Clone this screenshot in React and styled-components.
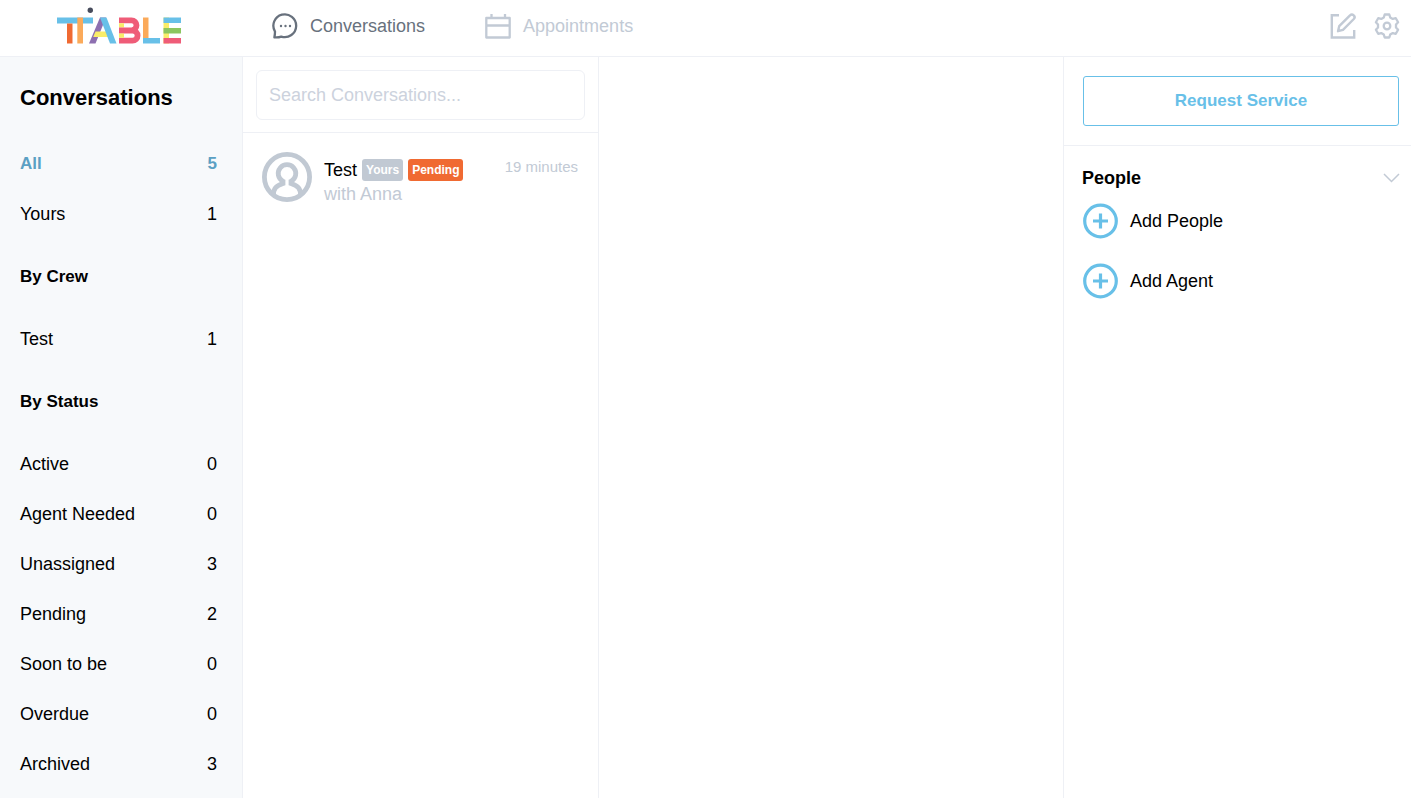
import React, { useState } from "react";
import styled, { createGlobalStyle } from "styled-components";

const GlobalStyle = createGlobalStyle`
    * {
        box-sizing: border-box;
        margin: 0;
        padding: 0;
    }
    body {
        background: #fff;
        color: #000;
        font-family: "Helvetica Neue", "Liberation Sans", Arial, sans-serif;
        font-size: 18px;
    }
    ul {
        list-style: none;
    }
    a {
        color: inherit;
        text-decoration: none;
    }
    button,
    input {
        font: inherit;
        color: inherit;
    }
    svg {
        display: block;
        flex-shrink: 0;
    }
`;

const Page = styled.div`
    display: flex;
    flex-direction: column;
    min-height: 100vh;
`;

const Header = styled.header`
    display: flex;
    align-items: center;
    height: 57px;
    padding: 0 11px 4px 0;
    border-bottom: 1px solid #eef0f5;
`;

const LogoLink = styled.a`
    width: 272px;
    padding-left: 56px;
`;

const Nav = styled.nav`
    display: flex;
    flex: 1;
    gap: 60px;
`;

const NavItem = styled.a`
    display: flex;
    align-items: center;
    gap: 12px;
    color: ${({ $active }) => ($active ? "#68717d" : "#c2cad5")};
`;

const Tools = styled.div`
    display: flex;
    gap: 18px;
`;

const IconButton = styled.button`
    border: 0;
    background: none;
    color: #c2cad5;
    cursor: pointer;
`;

const Body = styled.div`
    display: flex;
    flex: 1;
`;

const Sidebar = styled.aside`
    width: 243px;
    padding: 0 25px 9px 20px;
    background: #f7f9fb;
    border-right: 1px solid #eef0f5;
`;

const SidebarTitle = styled.h1`
    font-size: 22px;
    line-height: 82px;
`;

const GroupTitle = styled.h2`
    font-size: 17px;
    line-height: 75px;
`;

const FilterLink = styled.a`
    display: flex;
    justify-content: space-between;
    font-size: ${({ $active }) => ($active ? "17px" : "18px")};
    font-weight: ${({ $active }) => ($active ? "bold" : "normal")};
    line-height: 50px;
    color: ${({ $active }) => ($active ? "#5ba0c3" : "#000")};
`;

const ListColumn = styled.section`
    width: 356px;
    border-right: 1px solid #eef0f5;
`;

const SearchBar = styled.div`
    padding: 13px 13px 12px;
    border-bottom: 1px solid #eef0f5;
`;

const SearchInput = styled.input`
    display: block;
    width: 100%;
    height: 50px;
    padding: 0 12px;
    border: 1px solid #eef0f5;
    border-radius: 6px;
    outline: none;
    &::placeholder {
        color: #ccd2dd;
        opacity: 1;
    }
`;

const Conversation = styled.a`
    display: flex;
    gap: 12px;
    padding: 19px 20px 19px 19px;
`;

const Summary = styled.div`
    flex: 1;
    padding-top: 7px;
`;

const NameLine = styled.div`
    display: flex;
    align-items: center;
    gap: 5px;
    height: 22px;
`;

const Muted = styled.p`
    color: #c2cad5;
    line-height: 26px;
`;

const Badge = styled.span`
    padding: 0 4px;
    border-radius: 3px;
    background: ${({ $color }) => $color};
    color: #fff;
    font-size: 12px;
    font-weight: bold;
    line-height: 22px;
`;

const Time = styled.time`
    padding-top: 3px;
    color: #c2cad5;
    font-size: 15px;
    line-height: 24px;
`;

const Thread = styled.main`
    flex: 1;
`;

const Details = styled.aside`
    width: 348px;
    border-left: 1px solid #eef0f5;
`;

const RequestBox = styled.div`
    padding: 19px 12px 19px 19px;
    border-bottom: 1px solid #eef0f5;
`;

const RequestButton = styled.button`
    width: 100%;
    height: 50px;
    border: 1px solid #68c0e8;
    border-radius: 3px;
    background: #fff;
    color: #68c0e8;
    font-size: 17px;
    font-weight: bold;
    cursor: pointer;
`;

const PeopleBox = styled.div`
    padding: 19px 11px 19px 18px;
`;

const PeopleToggle = styled.button`
    display: flex;
    justify-content: space-between;
    align-items: center;
    width: 100%;
    height: 26px;
    border: 0;
    background: none;
    font-weight: bold;
    cursor: pointer;
`;

const PeopleList = styled.ul`
    display: flex;
    flex-direction: column;
    gap: 24px;
    padding-top: 12px;
`;

const AddButton = styled.button`
    display: flex;
    align-items: center;
    gap: 12px;
    border: 0;
    background: none;
    cursor: pointer;
`;

const groups = [
    {
        items: [
            { name: "All", count: 5 },
            { name: "Yours", count: 1 },
        ],
    },
    { title: "By Crew", items: [{ name: "Test", count: 1 }] },
    {
        title: "By Status",
        items: [
            { name: "Active", count: 0 },
            { name: "Agent Needed", count: 0 },
            { name: "Unassigned", count: 3 },
            { name: "Pending", count: 2 },
            { name: "Soon to be", count: 0 },
            { name: "Overdue", count: 0 },
            { name: "Archived", count: 3 },
        ],
    },
];

const Logo = () => (
    <svg width="126" height="40" viewBox="0 0 126 40" role="img">
        <title>TTable</title>
        <circle cx="34.3" cy="4.2" r="2.7" fill="#474c5c" />
        <path d="M1 11.5h36v6H1z" fill="#68c0e8" />
        <path d="M11 17.5h5.5v20H11z" fill="#f06a32" />
        <path d="M21.3 11.5H27v26h-5.7z" fill="#fbaa5a" />
        <path d="M44 11.5h6l-10.5 26H33z" fill="#8d6fb0" />
        <path d="M39.5 25.500h13l2 5.500H37.200z" fill="#f9ed69" />
        <path d="M44 11.500h6.500l10 26H54z" fill="#68c0e8" />
        <path
            d="M63 14.300h12.500a5 5 0 0 1 0 10H68M68 24.500h8.500a5 5 0 0 1 0 10.200H63"
            fill="none"
            stroke="#ef5c78"
            strokeWidth="5.800"
        />
        <path d="M63 17.200h5v4.300h-5zM63 27.300h5v4.500h-5z" fill="#f9ed69" />
        <path d="M63 21.500h5v5.800h-5z" fill="#ef5c78" />
        <path d="M87 11.500h5.500v20.500H87z" fill="#fbaa5a" />
        <path d="M87 32h17v5.500H87z" fill="#68c0e8" />
        <path d="M107.500 11.500h5.500v26h-5.500z" fill="#f9ed69" />
        <path d="M107.500 11.500H125V17h-17.500z" fill="#68c0e8" />
        <path d="M107.500 22H125v5.500h-17.500z" fill="#8cc660" />
        <path d="M107.500 32H125v5.500h-17.500z" fill="#ef5c78" />
    </svg>
);

const ChatIcon = () => (
    <svg width="26" height="26" viewBox="0 0 26 26" fill="none">
        <path
            d="M2.400 24.300c.4-1.700.6-3.500.6-5.700A11.400 11.400 0 1 1 9.300 23.600c-2.200.8-4.500 1-6.900.7z"
            stroke="currentColor"
            strokeWidth="2.300"
            strokeLinejoin="round"
        />
        <g fill="currentColor">
            <circle cx="9" cy="13" r="1.200" />
            <circle cx="13.500" cy="13" r="1.200" />
            <circle cx="18" cy="13" r="1.200" />
        </g>
    </svg>
);

const CalendarIcon = () => (
    <svg
        width="26"
        height="26"
        viewBox="0 0 26 26"
        fill="none"
        stroke="currentColor"
        strokeWidth="2.300"
    >
        <path
            d="M1.300 5h23.400v19.500H1.300zM1.300 12.500h23.400M6.500 1v4M20 1v4"
            strokeLinejoin="round"
        />
    </svg>
);

const ComposeIcon = () => (
    <svg
        width="26"
        height="26"
        viewBox="0 0 26 26"
        fill="none"
        stroke="currentColor"
        strokeWidth="2.400"
    >
        <path d="M9 2.200H1.800v22.300h22.400V17" />
        <path
            d="M8 18.200l1.200-5L20 2.400a2.500 2.500 0 0 1 3.800 3.600L13 16.800z"
            strokeLinejoin="round"
        />
    </svg>
);

const GearIcon = () => (
    <svg
        width="26"
        height="26"
        viewBox="-13 -13 26 26"
        fill="none"
        stroke="currentColor"
        strokeWidth="2.300"
        strokeLinejoin="round"
    >
        <path d="M-2.300-11.500H2.300L3.200-8.600 5.800-7.100 8.800-7.800 11.100-3.800 9-1.500V1.500L11.100 3.800 8.800 7.800 5.800 7.100 3.200 8.600 2.300 11.500H-2.300L-3.200 8.600-5.800 7.100-8.800 7.800-11.100 3.800-9 1.500V-1.500L-11.100-3.800-8.800-7.800-5.800-7.100-3.200-8.600z" />
        <circle r="3.300" />
    </svg>
);

const Avatar = () => (
    <svg
        width="50"
        height="50"
        viewBox="0 0 50 50"
        fill="none"
        stroke="#c1c9d3"
        strokeWidth="4.800"
    >
        <circle cx="25" cy="25" r="22.600" />
        <path d="M11.500 43c0-7 2.500-9 9.500-11.500v-2.200a8.800 8.800 0 1 1 8 0v2.200C36 34 38.500 36 38.500 43" />
    </svg>
);

const PlusIcon = () => (
    <svg
        width="36"
        height="36"
        viewBox="0 0 36 36"
        fill="none"
        stroke="#68c0e8"
        strokeWidth="3.200"
    >
        <circle cx="18.500" cy="18" r="15.800" />
        <path d="M18.500 10.500v15M11 18h15" />
    </svg>
);

const ChevronIcon = () => (
    <svg
        width="17"
        height="10"
        viewBox="0 0 17 10"
        fill="none"
        stroke="#c2cad5"
        strokeWidth="1.500"
    >
        <path d="M1 1l7.500 7.500L16 1" />
    </svg>
);

const App = () => {
    const [filter, setFilter] = useState("All");
    const [open, setOpen] = useState(true);

    return (
        <Page>
            <GlobalStyle />
            <Header>
                <LogoLink href="#">
                    <Logo />
                </LogoLink>
                <Nav>
                    <NavItem href="#conversations" $active>
                        <ChatIcon />
                        Conversations
                    </NavItem>
                    <NavItem href="#appointments">
                        <CalendarIcon />
                        Appointments
                    </NavItem>
                </Nav>
                <Tools>
                    <IconButton aria-label="New conversation">
                        <ComposeIcon />
                    </IconButton>
                    <IconButton aria-label="Settings">
                        <GearIcon />
                    </IconButton>
                </Tools>
            </Header>
            <Body>
                <Sidebar>
                    <SidebarTitle>Conversations</SidebarTitle>
                    {groups.map((group, index) => (
                        <section key={index}>
                            {group.title && (
                                <GroupTitle>{group.title}</GroupTitle>
                            )}
                            <ul>
                                {group.items.map(({ name, count }) => (
                                    <li key={name}>
                                        <FilterLink
                                            href="#conversations"
                                            $active={filter === name}
                                            onClick={() => setFilter(name)}
                                        >
                                            <span>{name}</span>
                                            <span>{count}</span>
                                        </FilterLink>
                                    </li>
                                ))}
                            </ul>
                        </section>
                    ))}
                </Sidebar>
                <ListColumn>
                    <SearchBar>
                        <SearchInput
                            type="search"
                            aria-label="Search Conversations"
                            placeholder="Search Conversations..."
                        />
                    </SearchBar>
                    <Conversation href="#test">
                        <Avatar />
                        <Summary>
                            <NameLine>
                                <span>Test</span>
                                <Badge $color="#c1c9d3">Yours</Badge>
                                <Badge $color="#f06a32">Pending</Badge>
                            </NameLine>
                            <Muted>with Anna</Muted>
                        </Summary>
                        <Time>19 minutes</Time>
                    </Conversation>
                </ListColumn>
                <Thread />
                <Details>
                    <RequestBox>
                        <RequestButton>Request Service</RequestButton>
                    </RequestBox>
                    <PeopleBox>
                        <PeopleToggle
                            aria-expanded={open}
                            onClick={() => setOpen(!open)}
                        >
                            People
                            <ChevronIcon />
                        </PeopleToggle>
                        {open && (
                            <PeopleList>
                                {["Add People", "Add Agent"].map((label) => (
                                    <li key={label}>
                                        <AddButton>
                                            <PlusIcon />
                                            {label}
                                        </AddButton>
                                    </li>
                                ))}
                            </PeopleList>
                        )}
                    </PeopleBox>
                </Details>
            </Body>
        </Page>
    );
};

export default App;
